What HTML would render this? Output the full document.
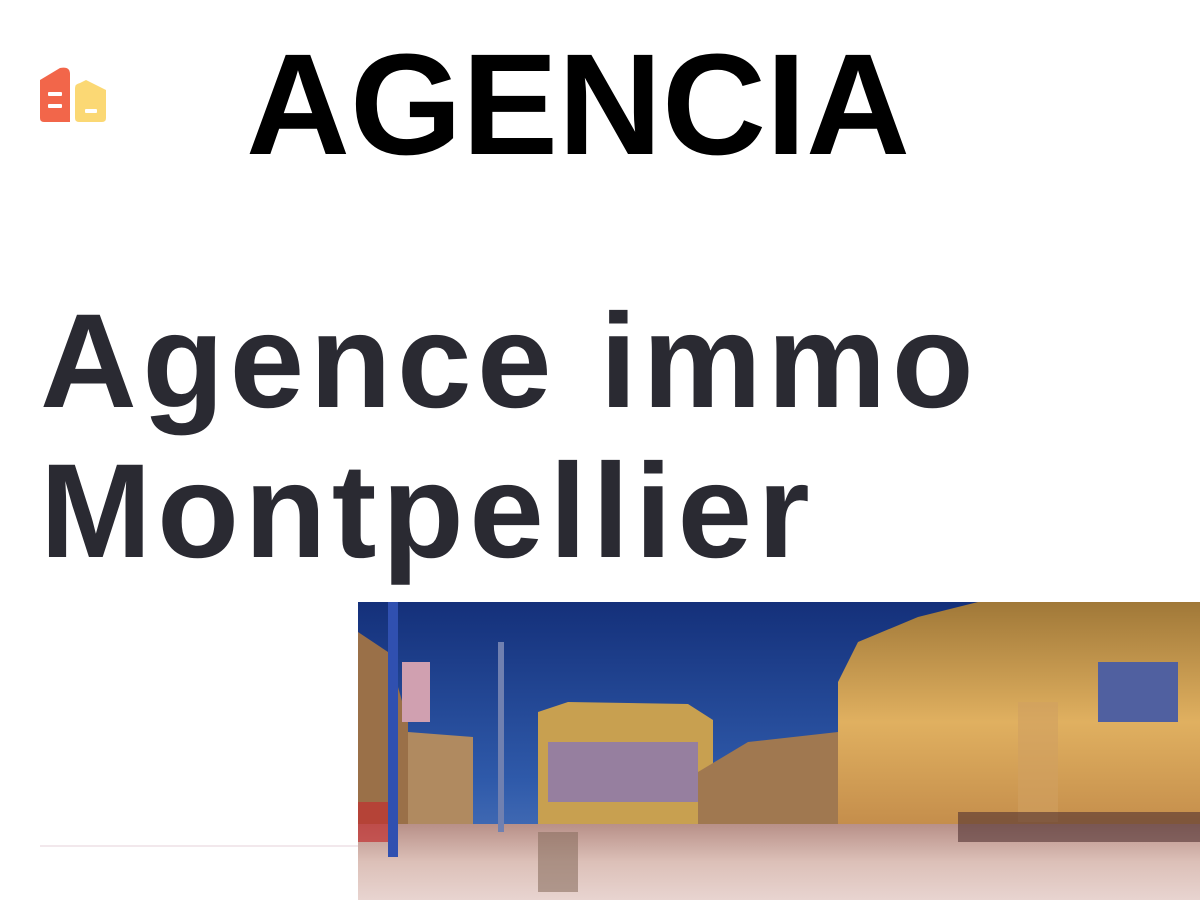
<!DOCTYPE html>
<html><head><meta charset="utf-8"><style>
html,body{margin:0;padding:0;background:#fff;width:1200px;height:900px;overflow:hidden;position:relative}
.t{position:absolute;left:246px;top:33px;font:bold 144px/1 "Liberation Sans",sans-serif;color:#000;white-space:nowrap}
.h{position:absolute;left:40px;top:287px;font:bold 134px/150px "Liberation Sans",sans-serif;color:#2a2a32;letter-spacing:5.5px;white-space:nowrap}
.line{position:absolute;left:40px;top:845px;width:318px;height:2px;background:#f2e8ec}
svg.p{position:absolute;left:358px;top:602px}
</style></head><body>
<svg width="70" height="60" style="position:absolute;left:38px;top:66px" viewBox="0 0 70 60">
<path d="M2 14 L22 2 Q32 0 32 8 L32 56 H6 Q2 56 2 52 Z" fill="#f2664a"/>
<rect x="10" y="26" width="14" height="4" rx="1" fill="#fff"/>
<rect x="10" y="38" width="14" height="4" rx="1" fill="#fff"/>
<path d="M37 22 Q37 18 42 17 L48 14 L68 24 L68 52 Q68 56 64 56 H41 Q37 56 37 52 Z" fill="#fbd874"/>
<rect x="47" y="43" width="12" height="4" rx="1" fill="#fff"/>
</svg>
<div class="t">AGENCIA</div>
<div class="h">Agence immo<br>Montpellier</div>
<div class="line"></div>
<svg class="p" width="842" height="298" viewBox="0 0 842 298">
<defs>
<linearGradient id="sky" x1="0" y1="0" x2="0" y2="1"><stop offset="0" stop-color="#14307a"/><stop offset="0.6" stop-color="#2f5aaa"/><stop offset="1" stop-color="#5a80c0"/></linearGradient>
<linearGradient id="gold" x1="0" y1="0" x2="0" y2="1"><stop offset="0" stop-color="#a07838"/><stop offset="0.5" stop-color="#e0b060"/><stop offset="1" stop-color="#c08848"/></linearGradient>
<linearGradient id="pl" x1="0" y1="0" x2="0" y2="1"><stop offset="0" stop-color="#b89088"/><stop offset="0.5" stop-color="#dcc0b8"/><stop offset="1" stop-color="#e8d4d0"/></linearGradient>
</defs>
<rect width="842" height="298" fill="url(#sky)"/>
<path d="M0 30 L30 50 L50 120 L50 225 L0 230 Z" fill="#9a7048"/>
<path d="M50 130 L115 135 L115 225 L50 228 Z" fill="#b08a60"/>
<path d="M180 110 L210 100 L330 102 L355 118 L355 225 L180 225 Z" fill="#c8a050"/>
<rect x="190" y="140" width="150" height="60" fill="#8070c0" opacity="0.7"/>
<path d="M340 170 L390 140 L480 130 L480 225 L340 225 Z" fill="#a07850"/>
<path d="M480 80 L500 40 L560 15 L620 0 L842 0 L842 240 L480 225 Z" fill="url(#gold)"/>
<rect x="740" y="60" width="80" height="60" fill="#5060a0"/>
<rect x="660" y="100" width="40" height="120" fill="#d0a060" opacity="0.6"/>
<rect y="222" width="842" height="76" fill="url(#pl)"/>
<rect x="30" y="0" width="10" height="255" fill="#3050b0"/>
<rect x="44" y="60" width="28" height="60" fill="#d0a0b0"/>
<rect x="140" y="40" width="6" height="190" fill="#7080b0"/>
<rect x="600" y="210" width="242" height="30" fill="#503030" opacity="0.6"/>
<rect x="0" y="200" width="30" height="40" fill="#c03030" opacity="0.7"/>
<rect x="180" y="230" width="40" height="60" fill="#8a7060" opacity="0.6"/>
</svg>
</body></html>
